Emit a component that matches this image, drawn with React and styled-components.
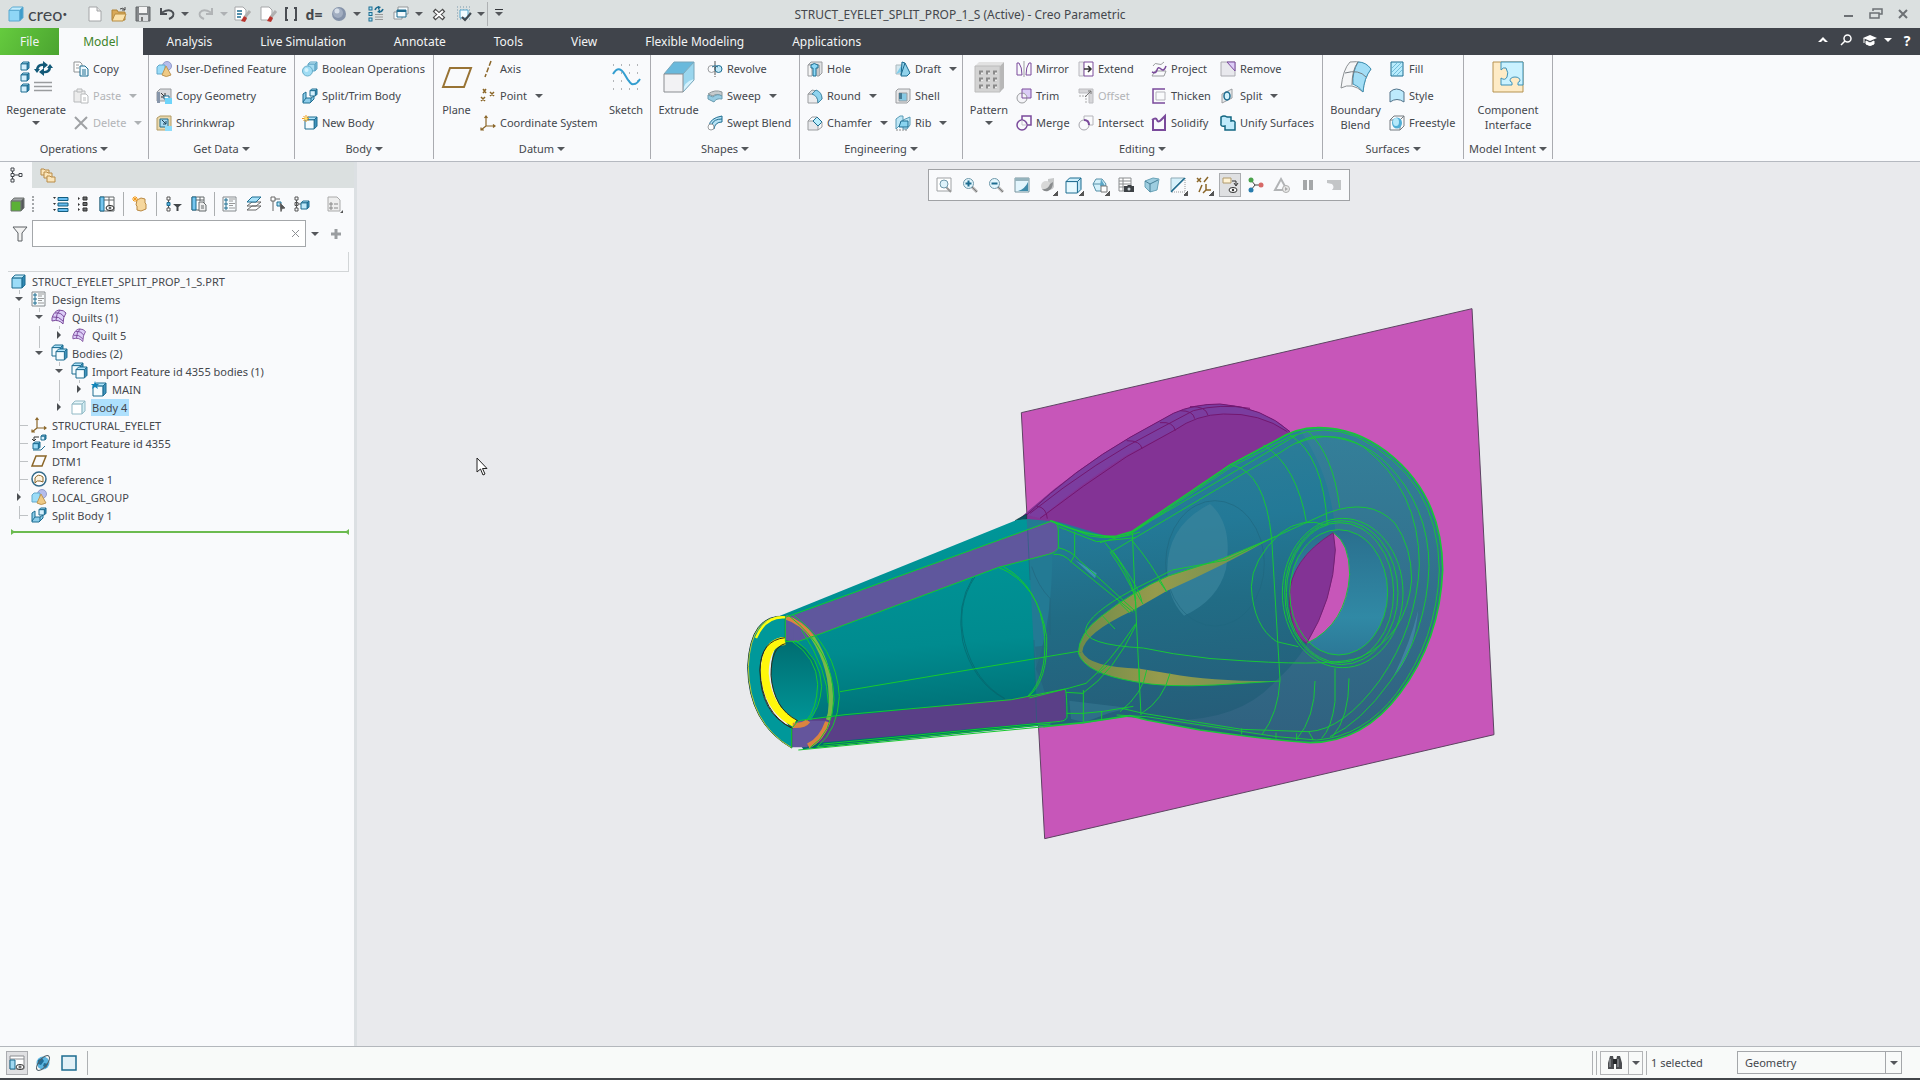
import { useState } from "react";
import styled, { createGlobalStyle, css } from "styled-components";

const B = "#1d6c90";
const L = "#aee4fb";
const P = "#7a4a9b";
const V = "#dccdf7";
const G = "#9b9da0";
const W = "#8a6527";
const D = "#43474d";

const Cube = ({ x = 2, y = 2, s = 12, front = "#d5f0fd", side = "#3f93bd", top = L, line = B }) => {
  const d = s * 0.24;
  return (
    <g stroke={line} strokeLinejoin="round">
      <path d={`M${x} ${y + d}l${d} ${-d}h${s - d}l${-d} ${d}z`} fill={top} />
      <path d={`M${x + s - d} ${y + d}l${d} ${-d}v${s - d}l${-d} ${d}z`} fill={side} />
      <rect x={x} y={y + d} width={s - d} height={s - d} fill={front} />
    </g>
  );
};

const SmallSquares = ({ x = 1, color = B, fill = L }) => (
  <g stroke={color} fill={fill}>
    <rect x={x} y="1" width="3" height="3" />
    <rect x={x} y="6.5" width="3" height="3" />
    <rect x={x} y="12" width="3" height="3" />
  </g>
);

const lens = (
  <>
    <path d="M10 10l5 5" stroke="#b4b4b4" strokeWidth="3" />
    <path d="M10 10l5 5" stroke="#7c7c7c" />
    <circle cx="6.5" cy="6.5" r="5" fill="#e3f6fd" stroke="#6f98aa" />
  </>
);

const quilt = (x, y, s) => (
  <g transform={`translate(${x} ${y}) scale(${s})`} stroke={P} fill={V}>
    <path d="M1 9Q3 2 8 1q5 0 7 3-3 4-3 11-4-5-11-3z" />
    <path d="M4 4q6-1 9 4M2 8q6-1 10 4M9 1Q5 5 5 11" fill="none" />
  </g>
);

const csys = (
  <g stroke={W} fill="none" strokeWidth="1.2">
    <path d="M6 1v10h9M6 11l-5 4M4.500 3L6 1l1.500 2M13 9.500l2 1.500-2 1.500M1 12.500V15h3" />
  </g>
);

const group = (
  <>
    <circle cx="11" cy="5" r="4.500" fill="#b5bdec" stroke="#929bc9" />
    <path d="M1 6l2-2h6v7l-2 2H1z" fill="#9bdcf8" stroke="#62a8ca" />
    <path d="M10 5l5 9q-5 3-9 0z" fill="#efca85" stroke="#bd9656" />
  </>
);

const split = (
  <g stroke={B}>
    <path d="M1 6l3-2v6h5l3-2v3l-4 4H1z" fill="#8dcdea" />
    <path d="M4 10l-3 4M9 10v4" />
    <Cube x={8} y={1} s={7} />
  </g>
);

const page = (
  <path d="M1 1h8l3 3v10H1z" fill="#fff" stroke="#a5a7a9" />
);

const eraser = (
  <>
    <path d="M16 5l-5 6" stroke="#b0b0b0" strokeWidth="3" />
    <path d="M10 10l3 2-2 4-4-1z" fill="#b9332c" />
  </>
);

const icons = {
  logo: <Cube x={1} y={1} s={14} front="#8fd6f6" side="#3f9ccb" top="#c5ecfd" line="#5aa9d0" />,
  newFile: <><path d="M2 1h8l4 4v10H2z" fill="#fff" stroke="#a2a4a6" /><path d="M10 1v4h4" fill="#e3e3e3" stroke="#a2a4a6" /></>,
  open: <><path d="M1 14V4h5l1 2h7v8z" fill="#d9a958" stroke="#af8337" /><path d="M1 15l3-7h11l-3 7z" fill="#fbe2ab" stroke="#b78d42" /><path d="M9 3q3-2 5 1M14 1v3h-3" fill="none" stroke="#444" /></>,
  save: <><path d="M1 1h14v14H1z" fill="#85888b" stroke="#636669" /><path d="M4 1h8v6H4z" fill="#f4f4f4" /><path d="M4 9h9v6H4z" fill="#dcdee0" /><path d="M6 11h2v4H6z" fill="#777" /></>,
  undo: <g fill="none" stroke="#4a4e53" strokeWidth="2"><path d="M2 6.500q8-4.500 11 0 2 4-4 6.500" /><path d="M1 2v6h6" /></g>,
  redo: <g fill="none" stroke="#b1b4b6" strokeWidth="2"><path d="M14 6.500q-8-4.500-11 0-2 4 4 6.500" /><path d="M15 2v6H9" /></g>,
  eraseCurrent: <>{page}<path d="M3 5h5M3 8h5M3 11h4" stroke={B} strokeWidth="1.500" />{eraser}</>,
  eraseOther: <>{page}{eraser}</>,
  brackets: <path d="M5 2H3v12h2M11 2h2v12h-2" fill="none" stroke="#4a4e53" strokeWidth="2" />,
  sphere: <><circle cx="8" cy="8" r="7" fill="#8492a9" /><circle cx="7" cy="7" r="5" fill="#a2aec1" /><circle cx="6" cy="5" r="2.500" fill="#d7dfe9" /></>,
  regen: <><SmallSquares /><path d="M7 8.500h8M7 11h8M7 13.500h8" stroke="#999" /><path d="M7 4q1-3 4-3M15 3q-1 3-4 3" fill="none" stroke={B} strokeWidth="1.500" /><path d="M10 0l3 1-3 3zM12 7L9 6l3-3z" fill={B} /></>,
  windows: <g fill="#f3fafd" stroke={B}><path d="M5 1h10v7H5z" stroke="#949698" /><path d="M1 6h8v7H1z" stroke="#949698" /><path d="M4 4h9v7H4z" /><path d="M4 5h9" strokeWidth="2" /></g>,
  closeWin: <><path d="M3 4l10 9M13 4L3 13" stroke="#4a4a4a" strokeWidth="4" /><path d="M4 5l8 7M12 5l-8 7" stroke="#fff" strokeWidth="2" /></>,
  select: <><path d="M1 1h14M1 4h14M1 7h14M1 10h14M1 13h14" stroke="#7898aa" strokeDasharray="1 2" /><path d="M4 4h8v8H4z" fill="#f2fbff" stroke="#54a6cd" /><path d="M6 11l3 3 6-7" fill="none" stroke="#414950" strokeWidth="2" /></>,
  copy: <g fill="#fff"><path d="M1 1h6l2 2v8H1z" stroke="#8f9294" /><path d="M3 4h3M3 7h3" stroke="#999" /><path d="M7 5h5l3 3v7H7z" fill="#f0faff" stroke={B} /><path d="M9 9h4M9 11h4M9 13h4" stroke={B} /></g>,
  paste: <g fill="#ececec" stroke="#b7b9bb"><path d="M1 3h11v11H1z" /><path d="M4 1h5v3H4z" /><path d="M8 6h5l2 2v7H8z" fill="#fff" /><path d="M10 10h3M10 12h3" /></g>,
  remove: <path d="M2 2l12 12M14 2L2 14" stroke="#9fa1a4" strokeWidth="2" />,
  udf: group,
  copyGeom: <><path d="M1 4l3-3h11v9l-3 3H1z" fill="#d8dadd" stroke="#96999d" /><path d="M1 4v11h3V4z" fill="#8796aa" /><path d="M5 5l4 4M9 5v4H5" stroke="#333" fill="none" /><path d="M8 8h5v3H8z" fill="#fff" stroke={B} /><path d="M9 10h7v6H9z" fill="#6ed4fa" /></>,
  shrink: <><path d="M1 3l3-2h11v10l-3 4H1z" fill="#e9d8ad" stroke="#b29a63" /><path d="M4 4h8v8H4z" fill="#a9d9f0" stroke={B} /><path d="M6 5l4 4M10 6v3H7" stroke="#1d4258" fill="none" /><path d="M9 11h7v5H9z" fill="#8ddcfa" /></>,
  boolean: <><Cube x={6} y={1} s={9} top="#d3f0fb" side="#7fbad3" front="#a6dcf2" line="#5ba4c4" /><circle cx="5.500" cy="10" r="5" fill="#9fdcf4" stroke="#6aaec9" /><circle cx="4.500" cy="9" r="2" fill="#d3f2fd" /></>,
  splitBody: split,
  newBody: <><Cube x={3} y={2} s={12} front="#f5fcff" /><path d="M4 0v7M0 3.500h7M1.500 1l5 5M6.500 1l-5 5" stroke="#f09a1a" /><circle cx="4" cy="3.500" r="1.500" fill="#ffe36c" /></>,
  axis: <path d="M11 0L5 16" stroke={W} strokeWidth="1.500" strokeDasharray="5 2" />,
  point: <path d="M3 1l3 4M6 1L3 5M10 4l4 4M14 4l-4 4M1 9l4 4M5 9l-4 4" stroke={W} strokeWidth="1.500" />,
  csys,
  revolve: <g fill="none" stroke={G}><ellipse cx="4.500" cy="8" rx="3.500" ry="3.500" /><ellipse cx="11.500" cy="8" rx="3.500" ry="3.500" fill="#bfe7f7" stroke={B} /><path d="M5 6q3-3 6 0" stroke={B} /><path d="M8 0v16" stroke="#555" strokeDasharray="4 1" /></g>,
  sweep: <><path d="M1 6q7-5 14-2v4q-6-3-9 0z" fill="#c5cbce" stroke="#8e9699" /><path d="M1 7l5 2q4-4 9-1v3q-6-1-8 3l-6-3z" fill="#96cbe2" stroke="#699baf" /></>,
  sweptBlend: <><path d="M2 11Q3 3 15 1v6q-7 0-8 7z" fill="#b8e3f5" stroke={B} /><path d="M5 9q2-5 10-5" stroke={B} fill="none" /><circle cx="4" cy="12" r="3" fill="#fff" stroke={G} /></>,
  hole: <><path d="M1 4l3-3h11v11l-3 3V4z" fill="#e0e2e4" stroke={G} /><path d="M1 4h4v11H1zM10 4h2v11h-2z" fill="#f4f4f4" stroke={G} /><path d="M4 4q3-3 7 0v3H9v8H6V7H4z" fill="#8ed9f7" stroke={B} /></>,
  round: <><path d="M1 6h5q5 1 5 9H1z" fill="#ebecee" stroke={G} /><path d="M1 6l4-4q10 1 10 9l-4 4q0-8-5-9z" fill="#d9dee1" stroke={G} /><path d="M5 6l4-4q6 2 6 9l-4 4q0-7-6-9z" fill="#8fd3ee" stroke="#438aa8" /></>,
  chamfer: <><path d="M1 6h5l5 5v4H1z" fill="#e7e8eb" stroke={G} /><path d="M6 6l4-4 5 5-4 4z" fill="#b9edfc" stroke={B} /><path d="M1 6l4-4h5M15 7v5l-4 3" fill="none" stroke={G} /></>,
  draft: <><path d="M1 4h7v9H1z" fill="#d4e7ef" stroke="#abb9be" /><path d="M1 13l5-2V5z" fill="#80cdea" /><path d="M7 1l3 1 5 10-3 3H6z" fill="#90d2eb" stroke={B} /><path d="M10 2l-4 12" stroke={B} /></>,
  shell: <><path d="M1 3l2-2h12v11l-3 3H1z" fill="#e5e6e8" stroke={G} /><path d="M4 5h8v8H4z" fill="#87cae5" stroke={G} /><path d="M4 5h3v6H4z" fill="#477c95" /></>,
  rib: <><path d="M1 4l4-3h3v9H5l-4 4zM8 5l7-3v8l-3 4H8z" fill="#bfe7f6" stroke="#599ab5" /><path d="M4 12h9V6H6z" fill="#8ad4ef" stroke={B} /><path d="M1 15h11" stroke="#888" strokeDasharray="2 1" /></>,
  mirror: <g fill="none" stroke={P}><path d="M1 2h2q3 4 3 12H1zM15 2h-2q-3 4-3 12h5z" /><path d="M8 0v16" stroke={G} /></g>,
  trim: <><path d="M6 1h9v9H6z" fill={V} stroke={P} /><circle cx="6" cy="10" r="5" fill="#f4f4f8" stroke={G} /><path d="M6 5v5h5" fill="none" stroke={P} /></>,
  merge: <g fill="none"><path d="M6 5V1h9v9h-4" stroke={P} strokeWidth="1.500" /><circle cx="6" cy="10" r="5" stroke={P} strokeWidth="1.500" /><path d="M6 5v5h5" stroke="#c3c3c9" /></g>,
  extend: <><path d="M1 1h5v14H1z" fill="#ededf0" stroke="#b9b9bf" /><path d="M6 1h9v14H6z" fill="#fff" stroke={P} /><path d="M6 8h6M10 5l3 3-3 3" fill="none" stroke="#333" strokeWidth="1.500" /></>,
  offset: <><path d="M1 1h14v14h-4V5H1z" fill="#d6d6d9" stroke="#bcbcc0" /><path d="M1 8h7v7" stroke="#aaa" strokeDasharray="2 1" fill="none" /><path d="M7 9l6-6M10 3h3v3" fill="none" stroke="#777" /></>,
  intersect: <><path d="M6 1h9v9h-4M6 1v4" fill="none" stroke="#b4b4ba" /><circle cx="6" cy="10" r="5" fill="none" stroke="#a6a6ad" /><path d="M6 5q5 0 5 5" stroke={P} strokeWidth="2" fill="none" /></>,
  project: <g fill="none"><path d="M2 5q2-4 5-2t6-2" stroke={G} /><path d="M1 15l3-5h11l-2 5z" stroke={G} /><path d="M1 11q4 2 5-2t4-1 5-3" stroke={P} strokeWidth="1.500" /></g>,
  thicken: <g fill="none"><path d="M14 1H2v14h12" stroke={P} strokeWidth="1.500" /><path d="M14 4H5v8h9z" stroke="#b4b4bb" /></g>,
  solidify: <path d="M1 5q4-3 5 0t4 0 4-4v14H2V5" fill="none" stroke={P} strokeWidth="2" />,
  removeSurf: <><path d="M1 1h14v14H1z" fill="#e8e8ed" stroke="#aaaab0" /><path d="M7 1h8v9z" fill={V} stroke={P} /></>,
  splitSurf: <><path d="M2 6l10-5v9L2 15z" fill="#e8ebed" stroke={G} /><ellipse cx="7" cy="8" rx="3" ry="4" fill="#d3f1fb" stroke={B} strokeWidth="1.500" /></>,
  unify: <path d="M1 2q3-2 6 0h4v4q5-1 4 3v6H5v-4q-5 1-4-3z" fill="#bfeafb" stroke="#126681" strokeWidth="1.500" />,
  fill: <><path d="M2 1h12v14H2z" fill="#b8ecfd" stroke={B} /><path d="M3 7l5-5M3 11l9-9M4 14l9-9M8 14l5-5" stroke="#72bdda" /></>,
  style: <path d="M1 4q6-6 14 0v10q-7-5-14 0z" fill="#bdeafc" stroke="#52738a" />,
  freestyle: <><path d="M1 5l4-4h10v10l-4 4H1zM1 5h10v10M11 5l4-4" fill="none" stroke="#747b80" /><ellipse cx="8" cy="8" rx="5" ry="5.500" fill="#51aed5" /><ellipse cx="7" cy="7" rx="3" ry="4" fill="#b5e9fb" /></>,
  tree: <g fill="none" stroke={D}><path d="M3 1h3v3H3zM3 6.500h3v3H3zM3 12h3v3H3zM11 6.500h3v3h-3z" /><path d="M6 8h5M4.500 4v2.500M4.500 9.500V12" /></g>,
  folders: <g fill="#fbe5b9" stroke="#b88b46"><path d="M1 2h3l1 1h4v5H1z" /><path d="M4 5h3l1 1h4v5H4z" /><path d="M7 9h3l1 1h4v5H7z" /></g>,
  greenCube: <Cube x={1} y={2} s={13} front="#5bb136" side="#55585b" top="#a0a3a5" line="#6e7370" />,
  expand: <g><path d="M0 1h3l-1.500 2zM0 7h3l-1.500 2zM0 13h3l-1.500 2z" fill="#333" /><path d="M5 1.500h10v3H5zM5 7h10v3H5zM5 12.500h10v3H5z" fill="#67bdf0" stroke="#135e80" /></g>,
  collapse: <g><path d="M2 1v3l2-1.500zM2 7v3l2-1.500zM2 12v3l2-1.500z" fill="#333" /><path d="M7 1h4v3H7zM7 6.500h4v3H7zM7 12h4v3H7z" fill="#6b6e70" stroke="#333" /></g>,
  columns: <g stroke="#63686b"><path d="M1 1h14v14H1z" fill="#fff" /><path d="M1 1h4v14H1z" fill="#77c6ef" stroke={B} /><path d="M5 4h10M10 1v9" /><ellipse cx="11" cy="12" rx="4" ry="2.500" fill="#fff" stroke="#222" /><circle cx="11" cy="12" r="1" fill="#222" /></g>,
  newItem: <><path d="M5 4l4-2 4 1v4l1 1v5l-5 2-4-1v-4l-1-1z" fill="#f6d79d" stroke="#b98841" /><path d="M3 0v6M0 3h6M1 1l4 4M5 1L1 5" stroke="#f39a19" /></>,
  filterTree: <g><path d="M1 1h3v3H1zM1 12h3v3H1zM2.500 4v8" fill="#fff" stroke="#555" /><path d="M1 6.500h3v3H1z" fill="#54aee0" stroke={B} /><path d="M7 8h9l-3.500 3v4h-2v-4z" fill="#44484c" /></g>,
  columnsPage: <g stroke="#63686b"><path d="M1 1h12v13H1z" fill="#fff" /><path d="M1 1h4v13H1z" fill="#77c6ef" stroke={B} /><path d="M5 4h8M9 1v4" /><path d="M8 6h4l3 3v6H8z" fill="#eee" /><path d="M10 10h3M10 12h3" /></g>,
  list: <g><path d="M1 1h13v14H1z" fill="#f7fbfd" stroke="#85898c" /><path d="M3 3h2v2H3zM3 7h2v2H3zM3 11h2v2H3z" fill="#fff" stroke={B} /><path d="M7 3h6M7 5h4M7 7.500h6M7 9.500h4M7 12h6" stroke="#999" /></g>,
  layers: <g><path d="M1 14l5-4h9l-5 4zM1 10l5-4h9l-5 4z" fill="#fff" stroke="#666" /><path d="M1 6l5-5h9l-5 5z" fill="#a8e2fa" stroke={B} /></g>,
  pick: <g fill="#fff" stroke="#666"><path d="M1 1h4v4H1zM5 3h5M3 5v10" /><path d="M7 6h4v4H7z" fill={L} stroke={B} /><path d="M10 7l5 5-3 .5-1 3z" fill="#555" /></g>,
  treeBody: <><g fill="none" stroke="#555"><path d="M1 1h3v3H1zM1 6.500h3v3H1zM1 12h3v3H1zM4 8h3M2.500 4v8" /></g><Cube x={7} y={5} s={8} front="#bfe9fa" /></>,
  notes: <g><path d="M2 1h9l3 3v11H2z" fill="#eee" stroke="#aaa" /><path d="M4 7h2v2H4zM4 11h2v2H4zM8 8h4M8 12h4" fill="none" stroke="#888" /><path d="M17 14v3h-3z" fill="#555" /></g>,
  funnel: <path d="M1 1h14l-5 6v8H6V7z" fill="#f2f2f2" stroke="#5c6065" />,
  part: <Cube x={1} y={2} s={13} front="#9bdcf8" side="#3189b4" top="#c3edfd" />,
  quilts: <>{quilt(0, 0, 1)}</>,
  quilt: <>{quilt(1, 1, 0.9)}</>,
  bodies: <><Cube x={1} y={0} s={11} front="#f4fcff" /><Cube x={5} y={4} s={11} front="#f4fcff" /></>,
  main: <><Cube x={2} y={2} s={13} front="#f4fcff" /><path d="M4 0l1.200 3H8L6 5l1 3-3-2-3 2 1-3-2-2h3z" fill="#1285b9" /></>,
  body: <Cube x={1} y={2} s={13} front="#fff" side="#d3edf4" top="#e7f6fa" line="#91b9c5" />,
  importFeat: <><Cube x={10} y={0} s={5} /><Cube x={2} y={7} s={7} front="#9bdcf8" /><path d="M8 2H3v4M1 4l2 2 2-2" fill="none" stroke="#333" /><path d="M2 15h8l4-4" fill="none" stroke={B} /></>,
  datum: <path d="M1 13L5 3h10l-4 10z" fill="none" stroke={W} strokeWidth="1.500" />,
  reference: <><circle cx="8" cy="8" r="7" fill="#fff" stroke="#356b89" strokeWidth="1.500" /><path d="M4 12V7q3-5 8-1v5l-3-1q-3-1-5 2z" fill="#fdf3df" stroke={W} /></>,
  zoomFit: <><path d="M1 1h14v13H1z" fill="#fff" stroke="#9ea1a4" /><path d="M10 10l5 5" stroke="#999" strokeWidth="2" /><circle cx="8" cy="7" r="4" fill="#def3fb" stroke="#6f98aa" /></>,
  zoomIn: <>{lens}<path d="M3.500 6.500h6M6.500 3.500v6" stroke={B} strokeWidth="2" /></>,
  zoomOut: <>{lens}<path d="M3.500 6.500h6" stroke={B} strokeWidth="2" /></>,
  repaint: <><path d="M1 1h14v14H1z" fill="#e2f5fd" stroke="#78949e" /><path d="M1 1h14v3H1z" fill="#95b3bd" /><path d="M14 5v9H4q7-2 10-9z" fill="#3f8baa" /></>,
  shade: <><path d="M8 2l6-1v9q-2 4-6 2z" fill="#c7c9ca" /><circle cx="6" cy="9" r="5" fill="#d8d8d8" /><path d="M2 12q6 1 8-5l3-2q0 7-5 9-4 1-6-2z" fill="#888b8d" /></>,
  views: <Cube x={0} y={1} s={15} front="#e7f9ff" side="#bde4f4" top="#ceeffb" />,
  saved: <><path d="M1 7l3-5h6l4 5-3 7H4z" fill="#d3f0fa" stroke="#5790a8" /><path d="M1 7h8" stroke="#5790a8" /><path d="M9 2l4 7H8z" fill="#5ba6c7" /><path d="M9 9h6v6H9z" fill="#fff" stroke="#777" /></>,
  camera: <><path d="M1 1h12v13H1zM1 4h12M1 7h12M1 10h12M5 1v13" fill="#fff" stroke="#8b8e90" /><path d="M6 9h3l1-1h3l1 1h2v6H6z" fill="#3d4145" /><circle cx="11" cy="12" r="1.500" fill="#cbd4d9" /></>,
  perspective: <><path d="M1 4l8-3 6 1-2 11-7 2-5-5z" fill="#9dcde0" stroke="#6aa3b8" /><path d="M1 4l5 3 8-4M6 7v8" fill="none" stroke="#477f97" /></>,
  section: <><path d="M1 1h13L1 14z" fill="#d6f0fa" stroke="#8ca9b5" /><path d="M15 1v14H2" fill="none" stroke="#999" strokeDasharray="1 1" /><path d="M15 1L1 15" stroke={B} strokeWidth="1.500" /></>,
  datums: <path d="M1 1l4 4M5 1L1 5M12 0L8 5M6 8l-3 7M10 7v6h5M10 13l-3 3" fill="none" stroke={W} strokeWidth="1.500" />,
  annot: <><path d="M1 1h8v5H1z" fill="#fff3d5" stroke="#b09a6c" /><path d="M10 4h4v4M12 6l2 3 2-3" fill="none" stroke="#333" /><ellipse cx="11" cy="13" rx="4" ry="2.500" fill="#fff" stroke="#333" /><circle cx="11" cy="13" r="1.200" fill="#333" /></>,
  spin: <><path d="M3 3l4 5-4 5M7 8h6" fill="none" stroke="#444" /><circle cx="3" cy="3" r="2.500" fill="#4aa24b" /><circle cx="3" cy="13" r="2.500" fill="#287cae" /><circle cx="13" cy="8" r="2.500" fill="#d76967" /></>,
  sim: <><path d="M7 2l6 11H1z" fill="none" stroke="#b2b4b6" strokeWidth="2" /><circle cx="12" cy="12" r="3.500" fill="#e9e9e9" stroke="#adadad" /><path d="M11 10l3 2-3 2z" fill="#aaa" /></>,
  pause: <path d="M3 3h4v10H3zM9 3h4v10H9z" fill="#a5a7a9" />,
  stream: <path d="M1 3h14v10H6q3-3 0-6L1 6z" fill="#c3c5c7" />,
  navigator: <g stroke="#8a8d90"><path d="M1 1h14v13H1z" fill="#fff" /><path d="M1 4h14" /><path d="M1 5h5v9H1z" fill="#a1d8f1" stroke={B} /><ellipse cx="11" cy="12" rx="4" ry="2.500" fill="#fff" stroke="#333" /><circle cx="11" cy="12" r="1.200" fill="#333" /></g>,
  globe: <><circle cx="8" cy="8" r="6.500" fill="#5bb5e0" /><path d="M3 5l4-2 2 3-3 4-3-1zM9 8l4 1-2 4-3-2z" fill="#206e98" /><ellipse cx="8" cy="8" rx="9" ry="4" transform="rotate(-50 8 8)" fill="none" stroke="#51616a" /></>,
  square: <path d="M1 1h14v14H1z" fill="#e2f1f7" stroke={B} strokeWidth="1.500" />,
  find: <><path d="M3 1h3l1 5v8H1V8zM10 1h3l2 7v6H9V6z" fill="#4a4d50" /><path d="M6 4h4v5H6z" fill="#25282a" /><path d="M3 4v8M11 4v8" stroke="#a6abae" /></>,
  minimize: <path d="M3 10h9" stroke="#6c7074" strokeWidth="2" />,
  restore: <path d="M5 5V3h9v5h-3M2 7h9v5H2zM2 7h9" fill="none" stroke="#6c7074" strokeWidth="1.500" />,
  close: <path d="M4 4l8 8M12 4l-8 8" stroke="#6c7074" strokeWidth="2" />,
  up: <path d="M3 10l5-5 5 5h-3L8 8l-2 2z" fill="#fff" />,
  search: <path d="M7 9l-4 4M9.500 3a3.500 3.500 0 1 0 0 7 3.500 3.500 0 1 0 0-7z" fill="none" stroke="#fff" strokeWidth="1.500" />,
  learn: <><path d="M1 6l7-3 7 3-7 3z" fill="#fff" /><path d="M4 9v3q4 3 8 0V9l-4 2zM2 6v5" fill="#fff" stroke="#fff" /></>,
};

const big = {
  regenerate: (
    <>
      {[1, 12, 23].map((y) => <Cube key={y} x={1} y={y} s={8} />)}
      <path d="M14 21.500h18M14 25.500h18M14 29.500h18" stroke="#9a9c9e" strokeWidth="1.500" />
      <path d="M17 9q1-6 7-5M30 5q0 7-7 6" fill="none" stroke="#125978" strokeWidth="2.500" />
      <path d="M23 0l5 4-5 4zM24 7l-5 4 5 4zM14 8h6l-3 4zM27 7h6l-3-4z" fill="#125978" />
    </>
  ),
  plane: <path d="M2 26L9 7h21l-7 19z" fill="none" stroke="#987334" strokeWidth="2" />,
  sketch: (
    <>
      <path d="M3 4h27M3 12h27M3 20h27M3 28h27" stroke="#6d7175" strokeDasharray="1 7" />
      <path d="M3 13q6-10 12 1t9 9q3 0 6-5" fill="none" stroke="#349ed0" strokeWidth="2" />
    </>
  ),
  extrude: (
    <>
      <path d="M1 13L11 1h20L20 13z" fill="#69b9dc" />
      <path d="M20 13L31 1v18L20 31z" fill="#9ad6ee" />
      <path d="M31 1v18L20 31q0-10 11-13z" fill="#d4f2fd" />
      <path d="M1 13L11 1h20v18L20 31M20 13L31 1" fill="none" stroke="#78a6ba" />
      <path d="M1 13h19v18H1z" fill="#f2f2f4" stroke="#8a8d91" />
    </>
  ),
  pattern: (
    <>
      <path d="M2 5l4-4h25l-4 4z" fill="#e2e2e2" />
      <path d="M27 5l4-4v26l-4 4z" fill="#b7b7b7" />
      <path d="M2 5h25v26H2z" fill="#d3d3d3" stroke="#bcbcbc" />
      <path d="M6 11.500h18M6 18.500h18M6 25.500h18" stroke="#8b8b8b" strokeWidth="4" strokeDasharray="4 3" />
      <path d="M8 12.500h16M8 19.500h16M8 26.500h16" stroke="#ececec" strokeWidth="2" strokeDasharray="2 5" />
    </>
  ),
  boundary: (
    <>
      <path d="M1 27Q3 8 10 1q14-2 21 7-7 9-8 23Q12 21 1 27z" fill="#f5f6f7" stroke="#8c9093" />
      <path d="M18 1q-6 11-5 22 6 2 10 8 1-14 8-23-5-7-13-7z" fill="#a3def6" stroke="#3e92b5" />
      <path d="M5 12q14-4 21 4M18 1q-6 8-6 23" fill="none" stroke="#777d82" />
    </>
  ),
  component: (
    <>
      <path d="M1 1h30v30H1z" fill="#feebc6" stroke="#b59251" />
      <path d="M9 1h22v23h-5q-1-3 2-4 0-4-5-4t-5 4q3 1 2 4H9v-7q4 3 6-1t-1-9q-3-1-5 2z" fill="#caf2ff" stroke="#3d91b8" />
    </>
  ),
};

const Icon = ({ name, size = 16 }) => (
  <Svg $size={size} viewBox={big[name] ? "0 0 32 32" : "0 0 16 16"} aria-hidden="true">
    {big[name] || icons[name]}
  </Svg>
);

const ribbon = [
  {
    title: "Operations",
    cols: [
      { big: "regenerate", label: "Regenerate", w: 58, menu: true },
      { w: 68, items: [["copy", "Copy"], ["paste", "Paste", 1, 1], ["remove", "Delete", 1, 1]] },
    ],
  },
  { title: "Get Data", cols: [{ w: 131, items: [["udf", "User-Defined Feature"], ["copyGeom", "Copy Geometry"], ["shrink", "Shrinkwrap"]] }] },
  { title: "Body", cols: [{ w: 124, items: [["boolean", "Boolean Operations"], ["splitBody", "Split/Trim Body"], ["newBody", "New Body"]] }] },
  {
    title: "Datum",
    cols: [
      { big: "plane", label: "Plane", w: 31 },
      { w: 121, items: [["axis", "Axis"], ["point", "Point", 1], ["csys", "Coordinate System"]] },
      { big: "sketch", label: "Sketch", w: 34 },
    ],
  },
  {
    title: "Shapes",
    cols: [
      { big: "extrude", label: "Extrude", w: 41 },
      { w: 85, items: [["revolve", "Revolve"], ["sweep", "Sweep", 1], ["sweptBlend", "Swept Blend"]] },
    ],
  },
  {
    title: "Engineering",
    cols: [
      { w: 80, items: [["hole", "Hole"], ["round", "Round", 1], ["chamfer", "Chamfer", 1]] },
      { w: 60, items: [["draft", "Draft", 1], ["shell", "Shell"], ["rib", "Rib", 1]] },
    ],
  },
  {
    title: "Editing",
    cols: [
      { big: "pattern", label: "Pattern", w: 38, menu: true },
      { w: 54, items: [["mirror", "Mirror"], ["trim", "Trim"], ["merge", "Merge"]] },
      { w: 65, items: [["extend", "Extend"], ["offset", "Offset", 0, 1], ["intersect", "Intersect"]] },
      { w: 61, items: [["project", "Project"], ["thicken", "Thicken"], ["solidify", "Solidify"]] },
      { w: 95, items: [["removeSurf", "Remove"], ["splitSurf", "Split", 1], ["unify", "Unify Surfaces"]] },
    ],
  },
  {
    title: "Surfaces",
    cols: [
      { big: "boundary", label: "Boundary Blend", w: 51 },
      { w: 67, items: [["fill", "Fill"], ["style", "Style"], ["freestyle", "Freestyle"]] },
    ],
  },
  { title: "Model Intent", cols: [{ big: "component", label: "Component Interface", w: 74 }] },
];

const menus = ["Analysis", "Live Simulation", "Annotate", "Tools", "View", "Flexible Modeling", "Applications"];

const quick = [
  ["newFile", 24], ["open", 24], ["save", 24], ["undo", 25], ["arrow", 10], ["redo", 29], ["arrowOff", 9],
  ["eraseCurrent", 28], ["eraseOther", 23], ["brackets", 23], ["d=", 24], ["sphere", 25], ["arrow", 11],
  ["regen", 27], ["windows", 24], ["arrow", 12], ["closeWin", 27], ["select", 23], ["arrow", 12],
];

const treeTools = [
  ["greenCube", 24], ["dots", 16], ["expand", 25], ["collapse", 22], ["columns", 24], ["sep", 8], ["newItem", 26],
  ["sep", 9], ["filterTree", 26], ["columnsPage", 24], ["sep", 8], ["list", 24], ["layers", 24], ["pick", 24],
  ["treeBody", 24], ["notes", 40],
];

const viewTools = [
  "zoomFit", "zoomIn", "zoomOut", "repaint", "shade", "views", "saved", "camera",
  "perspective", "section", "datums", "annot", "spin", "sim", "pause", "stream",
];
const withMenu = ["shade", "views", "saved", "section", "datums"];

// guides: "l" line, "t" tick, "e" last tick, "b" blank, "o" open, "c" closed
const tree = [
  ["", "part", "STRUCT_EYELET_SPLIT_PROP_1_S.PRT"],
  ["o", "list", "Design Items"],
  ["lo", "quilts", "Quilts (1)"],
  ["llc", "quilt", "Quilt 5"],
  ["lo", "bodies", "Bodies (2)"],
  ["lbo", "bodies", "Import Feature id 4355 bodies (1)"],
  ["lblc", "main", "MAIN"],
  ["lbc", "body", "Body 4"],
  ["t", "csys", "STRUCTURAL_EYELET"],
  ["t", "importFeat", "Import Feature id 4355"],
  ["t", "datum", "DTM1"],
  ["t", "reference", "Reference 1"],
  ["c", "udf", "LOCAL_GROUP"],
  ["e", "splitBody", "Split Body 1"],
];

function Model3D() {
  return (
    <ModelSvg viewBox="0 -240 2340 1650" role="img" aria-label="Structural eyelet model">
      <defs>
        <linearGradient id="tube" x1="0" y1="0" x2="0.1" y2="1">
          <stop offset="0" stopColor="#00989a" />
          <stop offset="0.6" stopColor="#008b8f" />
          <stop offset="1" stopColor="#00696f" />
        </linearGradient>
        <linearGradient id="eye" x1="0" y1="0" x2="0.15" y2="1">
          <stop offset="0" stopColor="#2f7f99" />
          <stop offset="0.35" stopColor="#237997" />
          <stop offset="0.6" stopColor="#216c85" />
          <stop offset="1" stopColor="#265c78" />
        </linearGradient>
        <linearGradient id="rim" x1="0" y1="0" x2="0" y2="1">
          <stop offset="0" stopColor="#34809a" />
          <stop offset="0.5" stopColor="#32708d" />
          <stop offset="1" stopColor="#30617f" />
        </linearGradient>
        <linearGradient id="bore" x1="0" y1="0" x2="0" y2="1">
          <stop offset="0" stopColor="#2a6f8e" />
          <stop offset="0.7" stopColor="#3089a5" />
          <stop offset="1" stopColor="#2c7897" />
        </linearGradient>
        <linearGradient id="inner" x1="0" y1="0" x2="0" y2="1">
          <stop offset="0" stopColor="#006d71" />
          <stop offset="1" stopColor="#009496" />
        </linearGradient>
        <linearGradient id="olive" x1="0" y1="0" x2="1" y2="0">
          <stop offset="0" stopColor="#6f8a4a" />
          <stop offset="0.4" stopColor="#969b4c" />
          <stop offset="1" stopColor="#688f56" />
        </linearGradient>
      </defs>
      <path d="M874 98L2226-214l66 1278-1348 312z" fill="#c756b9" stroke="#5d4462" strokeWidth="3" />

      {/* far half of the eyelet, seen through the datum plane */}
      <path d="M870 415Q1030 270 1200 172L1330 100Q1390 72 1470 72 1600 82 1680 155L1720 470 1240 560 970 440z" fill="#833395" />
      <path d="M890 405Q1030 270 1200 172L1330 100Q1390 72 1470 72 1600 82 1680 155L1672 155Q1590 98 1480 102 1400 108 1330 152L1190 225Q1040 320 930 415z" fill="#7b3d9f" />
      <g fill="none" stroke="#731770" strokeWidth="3">
        <path d="M890 405Q1030 270 1200 172L1330 100Q1390 72 1470 72 1600 82 1680 155M900 400Q1100 240 1290 145L1390 92Q1470 70 1560 85M930 415Q1060 315 1190 230L1335 150Q1400 104 1480 102 1590 98 1672 155" />
        <path d="M1190 182q42 0 46 24M1290 128q40-4 46 24M1350 92q40 0 44 24M1380 80q48-2 54 26M920 378q30 5 32 38" />
      </g>
      <path d="M855 422l35-20v16z" fill="#075560" stroke="#17373a" strokeWidth="2" />

      {/* tube */}
      <path d="M150 707L860 420l40-3 25 621-705 70q-110-150-90-280z" fill="url(#tube)" />
      <path d="M890 417L985 425 1240 500 1250 1000 1060 1027 925 1040z" fill="#237a94" />
      <path d="M915 800L1250 760v240l-190 30-135 8z" fill="#25687f" opacity="0.7" />

      {/* near half of the eyelet */}
      <path d="M965 422Q1090 475 1150 470 1190 465 1215 450L1500 255 1640 180Q1700 143 1760 143 1870 140 1970 215 2138 345 2138 570 2130 780 2010 940 1900 1088 1740 1088 1640 1082 1410 1050L1250 1020Q1190 998 1060 1028L965 1037q-20-120-48-170 60-170 48-445z" fill="url(#eye)" />
      <path d="M1710 150Q1860 120 1990 235 2138 370 2138 570 2130 780 2010 940 1900 1088 1740 1088L1260 1018Q1520 1040 1640 900 1800 760 1818 500 1815 300 1710 150z" fill="url(#rim)" />
      <path d="M1440 372q70 60 48 195-25 95-126 140-50-50-50-140 0-130 128-195z" fill="#3b849c" opacity="0.7" />
      <ellipse cx="1455" cy="550" rx="148" ry="188" fill="none" stroke="#20677e" strokeWidth="2" />
      <path d="M2065 690Q2050 830 1990 890q50-100 75-200z" fill="#4b93b2" opacity="0.6" />
      <path d="M1035 540l65 40-5 15z" fill="#50a9c8" opacity="0.6" />

      {/* eye opening */}
      <ellipse cx="1826" cy="637" rx="147" ry="188" fill="url(#bore)" />
      <path d="M1810 458Q1680 540 1678 650 1680 760 1730 790 1855 730 1859 580 1858 490 1810 458z" fill="#c756b9" />
      <path d="M1810 458Q1680 540 1678 650 1680 760 1730 790 1810 660 1816 510z" fill="#833395" stroke="#732173" strokeWidth="3" />

      {/* olive fillet */}
      <path d="M1045 820q0-60 70-112 90-72 200-120l165-53 145-60q-140 80-315 158l-100 58q-150 70-153 124z" fill="url(#olive)" />
      <path d="M1045 820q20 60 170 85 90 18 240 10l195-12q-200 2-330-22l-90-15q-155-5-173-51z" fill="url(#olive)" />

      {/* cut faces */}
      <path d="M166 715L965 423l18 15v70l-22 15-155 38L270 762l-65 22h-39z" fill="#5f579d" />
      <path d="M185 1045l20-23 640-65 160-30 3 85-12 10-770 70-41 8z" fill="#5a3f87" />
      <path d="M185 1045l20-23 90 0-20 50-45 30-45 0z" fill="#64559c" />
      <path d="M1018 962l180 22-60 15-75 28-40-10z" fill="#377892" opacity="0.6" />

      {/* tube mouth */}
      <path d="M166 709Q60 700 53 860 55 1030 185 1104v-60Q90 1000 90 870 92 780 166 773z" fill="#00989a" stroke="#113d3c" strokeWidth="3" />
      <path d="M166 780q-45 10-43 105 5 100 82 137l40-2q30-60 20-140-15-85-99-100z" fill="url(#inner)" />
      <path d="M166 711Q62 702 55 860 57 1030 185 1103" fill="none" stroke="#b9c935" strokeWidth="3" />
      <path d="M166 712q-60-5-88 62" fill="none" stroke="#ffff10" strokeWidth="7" />
      <path d="M166 783q-60 0-62 97 8 106 90 150" fill="none" stroke="#fff70c" strokeWidth="24" />
      <path d="M166 773Q92 780 90 870q5 130 97 175M166 791q-43 10-43 95 8 100 80 136" fill="none" stroke="#2d2d1b" strokeWidth="3" />
      <path d="M166 775v-60q15 0 24 5v60z" fill="#5f579d" />
      <path d="M168 712q45 14 80 60" fill="none" stroke="#db8440" strokeWidth="13" />
      <path d="M188 1036q35 2 46-14M235 1098q40-20 58-72" fill="none" stroke="#db8440" strokeWidth="16" />
      <path d="M248 772q60 93 54 203 0 25-8 45" fill="none" stroke="#78ba47" strokeWidth="13" />

      {/* dark hidden edges */}
      <g fill="none" stroke="#086168" strokeWidth="3" opacity="0.6">
        <path d="M728 594q-50 80-30 190 30 120 125 172" />
        <path d="M735 590q-60 90-30 200 30 115 120 166" />
        <path d="M893 450l7 150M905 560q20 60 55 95v110M912 780l8 250" stroke="#22647b" />
      </g>

      {/* highlighted edges */}
      <g fill="none" stroke="#16ca2e" strokeWidth="3">
        <path d="M166 712L965 423Q983 424 985 450v55q-10 15-30 18L806 562 270 762 205 784H166v-70" />
        <path d="M185 1104v-59l20-23 140-18 500-45 160-32q6 8 6 85-4 10-20 12L280 1092M205 1110l740-70M260 1100l700-68" />
        <path d="M190 706Q320 800 328 950 323 1050 262 1100M175 706Q310 810 312 960 306 1060 240 1103M215 750Q294 870 295 970M185 783q75 50 78 130-3 75-33 108M195 780q78 55 80 140-6 70-38 98" />
        <path d="M806 562Q925 610 950 770q5 130-55 180M820 560Q930 620 944 770q7 120-50 178" />
        <path d="M330 935L1045 814M965 422l115 46q80 15 150-12M985 440l115 45 115-12M1034 455v70l-12 22M1125 488Q1220 600 1218 690M1140 515q50 70 78 140" />
        <path d="M985 503q40 10 60 35l170 155M970 523q30-4 55 24l185 150M1218 730q-80 120-150 180l-50 14-120 30M1218 735q-65 140-160 205l-50-3M1060 930v95M1010 1000h50l60-6 90-15M1115 995v22" />
      </g>
      <g transform="translate(960)" fill="none" stroke="#18c638" strokeWidth="3">
        <path d="M0 422Q130 475 200 468L245 455 540 255 680 180Q740 143 800 143 910 140 1010 215 1178 345 1178 570 1170 780 1050 940 940 1088 780 1088 680 1082 450 1050L290 1020 240 1007 100 1028-20 1040" strokeWidth="5" />
        <path d="M150 488L245 460 545 260 720 170Q820 130 920 170 1165 290 1168 570 1160 780 1040 940 940 1070 800 1080L680 1070 290 1010 200 1005M180 518L590 275 690 218Q750 175 800 168 930 170 1010 250 1137 380 1137 560 1130 760 1020 905 930 1030 840 1070M740 190Q850 145 940 200 1108 330 1108 555 1100 740 990 900 880 1050 775 1055L575 1048 280 1000 215 985M230 465l510-300" />
        <path d="M247 458L255 640 273 1005M245 480q60 70 105 155M190 515q85 120 85 150M545 255q100 20 120 220l25 425q-5 100-55 165M640 195q100 60 130 235M720 165q100 60 112 270M775 155q75 70 94 228" />
        <path d="M85 820q0-60 70-112 90-72 200-120l165-53 145-60 165-75q130-50 205 30 50 70 50 170-15 165-150 230-70 30-345 13-110-4-220-22l-90-17q-180-10-173-56 8-45 140-118l120-60L530 540l145-70M85 820q20 60 170 85 90 18 240 10l195-12" />
        <ellipse cx="866" cy="637" rx="147" ry="188" />
        <ellipse cx="870" cy="638" rx="161" ry="210" />
        <ellipse cx="874" cy="638" rx="170" ry="216" />
        <ellipse cx="878" cy="639" rx="181" ry="224" />
        <path d="M830 436Q760 408 690 460 605 540 604 620 610 740 680 785l65 15M850 458q48 30 49 125-10 150-128 207" />
        <path d="M325 600l25 35M255 632l24 40M205 665l35 35M155 705l40 42M145 880l30-25M268 866v45M290 870q-10 70-80 125M360 880q-20 80-85 120M795 903q0 110-55 175M855 865v100q-10 80-40 110M897 895q0 120-50 175M575 1045v18M678 1058v18M740 1060v20M775 1053l15 27" />
      </g>
    </ModelSvg>
  );
}

function RibbonColumn({ col }) {
  if (col.big) {
    return (
      <BigButton $w={col.w}>
        <Icon name={col.big} size={32} />
        <span>{col.label}</span>
        {col.menu && <Arrow />}
      </BigButton>
    );
  }
  return (
    <Column $w={col.w}>
      {col.items.map(([icon, label, menu, off]) => (
        <Command key={label} disabled={!!off}>
          <Icon name={icon} />
          {label}
          {!!menu && <Arrow $off={!!off} $gap />}
        </Command>
      ))}
    </Column>
  );
}

function App() {
  const [filter, setFilter] = useState("");
  const [selected, setSelected] = useState("Body 4");

  return (
    <Window>
      <GlobalStyle />
      <TitleBar>
        <QuickBar>
          <Brand>
            <Icon name="logo" />
            creo<sup>•</sup>
          </Brand>
          {quick.map(([name, w], i) => (
            <ToolButton key={i} $w={w} aria-label={name}>
              {name.startsWith("arrow") ? (
                <Arrow $off={name === "arrowOff"} />
              ) : name === "d=" ? (
                <strong>d=</strong>
              ) : (
                <Icon name={name} />
              )}
            </ToolButton>
          ))}
          <BarLine />
          <ToolButton $w={22} aria-label="Customize">
            <CustomizeArrow />
          </ToolButton>
        </QuickBar>
        <h1>STRUCT_EYELET_SPLIT_PROP_1_S (Active) - Creo Parametric</h1>
        <WindowButtons>
          {["minimize", "restore", "close"].map((name) => (
            <ToolButton key={name} $w={27} aria-label={name}>
              <Icon name={name} />
            </ToolButton>
          ))}
        </WindowButtons>
      </TitleBar>

      <MenuBar>
        <FileTab>File</FileTab>
        <Tab $active>Model</Tab>
        {menus.map((menu) => (
          <Tab key={menu}>{menu}</Tab>
        ))}
        <MenuTools>
          <ToolButton $w={23} aria-label="Minimize ribbon"><Icon name="up" /></ToolButton>
          <ToolButton $w={24} aria-label="Search commands"><Icon name="search" /></ToolButton>
          <ToolButton $w={24} aria-label="Learning"><Icon name="learn" /></ToolButton>
          <ToolButton $w={12} aria-label="Learning options"><Arrow $light /></ToolButton>
          <ToolButton $w={26} aria-label="Help"><strong>?</strong></ToolButton>
        </MenuTools>
      </MenuBar>

      <Ribbon>
        {ribbon.map((grp) => (
          <Group key={grp.title}>
            <GroupBody>
              {grp.cols.map((col, i) => (
                <RibbonColumn key={i} col={col} />
              ))}
            </GroupBody>
            <GroupTitle>
              {grp.title}
              <Arrow />
            </GroupTitle>
          </Group>
        ))}
      </Ribbon>

      <Workspace>
        <Sidebar>
          <SideTabs>
            <SideTab $active aria-label="Model tree"><Icon name="tree" /></SideTab>
            <SideTab aria-label="Folders"><Icon name="folders" /></SideTab>
          </SideTabs>
          <TreeTools>
            {treeTools.map(([name, w], i) =>
              name === "sep" ? (
                <ToolLine key={i} $w={w} />
              ) : name === "dots" ? (
                <Grip key={i} />
              ) : (
                <ToolButton key={i} $w={w} aria-label={name}><Icon name={name} /></ToolButton>
              )
            )}
          </TreeTools>
          <FilterRow>
            <ToolButton $w={24} aria-label="Filter"><Icon name="funnel" /></ToolButton>
            <FilterBox>
              <input aria-label="Filter tree" value={filter} onChange={(e) => setFilter(e.target.value)} />
              <button aria-label="Clear filter" onClick={() => setFilter("")}>
                <svg width="9" height="9" viewBox="0 0 9 9"><path d="M1 1l7 7M8 1L1 8" stroke="#8d9093" /></svg>
              </button>
            </FilterBox>
            <ToolButton $w={18} aria-label="Filter history"><Arrow /></ToolButton>
            <ToolButton $w={24} aria-label="Add filter">
              <svg width="12" height="12" viewBox="0 0 12 12"><path d="M6 1v10M1 6h10" stroke="#9a9da0" strokeWidth="3" /></svg>
            </ToolButton>
          </FilterRow>
          <TreeHeader />
          <Tree>
            {tree.map(([guides, icon, label]) => (
              <TreeRow key={label}>
                {[...guides].map((g, i) => (
                  <Guide key={i} $type={g}>
                    {g === "o" && <Arrow />}
                    {g === "c" && <ClosedArrow />}
                  </Guide>
                ))}
                <TreeIcon><Icon name={icon} /></TreeIcon>
                <TreeLabel $selected={label === selected} onClick={() => setSelected(label)}>{label}</TreeLabel>
              </TreeRow>
            ))}
          </Tree>
          <InsertMarker />
        </Sidebar>

        <Viewport>
          <Model3D />
          <ViewBar>
            {viewTools.map((name) => (
              <ViewButton key={name} $on={name === "annot"} aria-label={name}>
                <Icon name={name} />
                {withMenu.includes(name) && <Corner />}
              </ViewButton>
            ))}
          </ViewBar>
          <Pointer viewBox="0 0 12 19">
            <path d="M1 1v14l3.500-3 2.500 6 2-1-2.500-5.500H11z" fill="#fff" stroke="#222" />
          </Pointer>
        </Viewport>
      </Workspace>

      <StatusBar>
        <ViewButton $on aria-label="Navigator"><Icon name="navigator" /></ViewButton>
        <ViewButton aria-label="Browser"><Icon name="globe" /></ViewButton>
        <ViewButton aria-label="Full screen"><Icon name="square" /></ViewButton>
        <BarLine />
        <StatusRight>
          <BarLine />
          <BarLine />
          <FindBox>
            <button aria-label="Find"><Icon name="find" /></button>
            <button aria-label="Find options"><Arrow /></button>
          </FindBox>
          <BarLine />
          <Count>1 selected</Count>
          <SelectBox>
            <select aria-label="Selection filter" defaultValue="Geometry">
              <option>Geometry</option>
              <option>Features</option>
            </select>
            <span><Arrow /></span>
          </SelectBox>
        </StatusRight>
      </StatusBar>
    </Window>
  );
}

const GlobalStyle = createGlobalStyle`
  * {
    box-sizing: border-box;
  }

  body {
    margin: 0;
    font-family: "Noto Sans", sans-serif;
    font-size: 11px;
    color: #44474c;
  }

  button, input, select {
    font: inherit;
    color: inherit;
    margin: 0;
    padding: 0;
    border: 0;
    background: none;
  }
`;

const Window = styled.div`
  display: flex;
  flex-direction: column;
  min-height: 100vh;
  border-bottom: 2px solid #43474b;
`;

const Svg = styled.svg`
  display: block;
  flex: none;
  width: ${(p) => p.$size}px;
  height: ${(p) => p.$size}px;
  overflow: visible;
`;

const Arrow = styled.i`
  flex: none;
  width: 0;
  border: solid transparent;
  border-width: 4px 4px 0;
  border-top-color: ${(p) => (p.$off ? "#aeb1b4" : p.$light ? "#fff" : "#54575b")};
  margin-left: ${(p) => (p.$gap ? "4px" : "0")};
`;

const ClosedArrow = styled.i`
  width: 0;
  border: solid transparent;
  border-width: 4px 0 4px 4px;
  border-left-color: #4b4e52;
`;

const CustomizeArrow = styled(Arrow)`
  position: relative;

  &::before {
    content: "";
    position: absolute;
    left: -4px;
    top: -7px;
    width: 8px;
    height: 1px;
    background: #33363a;
  }
`;

const ToolButton = styled.button`
  display: flex;
  flex: none;
  align-items: center;
  justify-content: center;
  width: ${(p) => p.$w}px;
  height: 24px;

  strong {
    font-size: 14px;
  }
`;

const BarLine = styled.span`
  flex: none;
  width: 1px;
  height: 24px;
  background: #aeb1b3;
`;

const TitleBar = styled.header`
  display: grid;
  grid-template-columns: 1fr auto 1fr;
  align-items: center;
  height: 28px;
  background: #dbe0e0;

  h1 {
    margin: 0;
    font-size: 12px;
    font-weight: 400;
  }
`;

const QuickBar = styled.div`
  display: flex;
  align-items: center;
`;

const Brand = styled.div`
  display: flex;
  align-items: center;
  gap: 4px;
  width: 83px;
  padding-left: 8px;
  font: 18px Lato, sans-serif;
  line-height: 24px;

  sup {
    font-size: 8px;
    margin-left: -4px;
  }
`;

const WindowButtons = styled.div`
  display: flex;
  justify-content: flex-end;
  padding-right: 4px;
`;

const MenuBar = styled.nav`
  display: flex;
  height: 27px;
  background: #40444b;
`;

const Tab = styled.button`
  padding: 0 24px;
  font-size: 12px;
  color: #f3f4f5;

  ${(p) =>
    p.$active &&
    css`
      color: #3f8429;
      background: #f9fafc;
    `}
`;

const FileTab = styled(Tab)`
  padding: 0 20px;
  background: linear-gradient(120deg, #65cb3e, #4ba430);
`;

const MenuTools = styled.div`
  display: flex;
  margin-left: auto;
  color: #fff;
`;

const Ribbon = styled.section`
  display: flex;
  height: 107px;
  padding-bottom: 2px;
  background: #f9fafc;
  border-bottom: 1px solid #b5b9c0;
`;

const Group = styled.div`
  display: flex;
  flex-direction: column;
  padding: 0 7px;
  border-right: 1px solid #aaabb0;
`;

const GroupBody = styled.div`
  display: flex;
  gap: 8px;
  height: 84px;
`;

const Column = styled.div`
  display: flex;
  flex-direction: column;
  width: ${(p) => p.$w}px;
`;

const Command = styled.button`
  display: flex;
  align-items: center;
  gap: 4px;
  height: 27px;
  white-space: nowrap;

  &:disabled {
    color: #b2b4b7;
  }
`;

const BigButton = styled.button`
  display: flex;
  flex-direction: column;
  align-items: center;
  width: ${(p) => p.$w}px;
  padding-top: 6px;
  line-height: 15px;

  span {
    margin: 9px 0 4px;
    text-align: center;
  }
`;

const GroupTitle = styled.div`
  display: flex;
  align-items: center;
  justify-content: center;
  gap: 3px;
  height: 21px;
  margin: 0 -4px;
  white-space: nowrap;
`;

const Workspace = styled.main`
  display: flex;
  flex: 1;
`;

const Sidebar = styled.aside`
  display: flex;
  flex-direction: column;
  flex: none;
  width: 357px;
  background: #f9fafc;
  border-right: 3px solid #dce0e3;
`;

const SideTabs = styled.div`
  display: flex;
  height: 26px;
  background: #dbe0e0;
`;

const SideTab = styled.button`
  display: flex;
  align-items: center;
  justify-content: center;
  width: 32px;
  background: ${(p) => (p.$active ? "#f9fafc" : "none")};
`;

const TreeTools = styled.div`
  display: flex;
  align-items: center;
  height: 32px;
  padding-left: 6px;
`;

const ToolLine = styled.span`
  width: ${(p) => p.$w}px;
  height: 24px;
  background: linear-gradient(#abaeb0, #abaeb0) center / 1px 100% no-repeat;
`;

const Grip = styled.span`
  width: 18px;
  height: 16px;
  border-left: 2px dotted #a4a7aa;
  margin-left: 2px;
`;

const FilterRow = styled.div`
  display: flex;
  align-items: center;
  padding: 0 6px 0 8px;
`;

const FilterBox = styled.div`
  display: flex;
  align-items: center;
  flex: 1;
  height: 27px;
  background: #fff;
  border: 1px solid #a4a7aa;

  input {
    flex: 1;
    min-width: 0;
    height: 24px;
    padding: 0 4px;
    outline: 0;
  }

  button {
    padding: 0 5px;
  }
`;

const TreeHeader = styled.div`
  height: 20px;
  margin: 5px 5px 0 8px;
  border: solid #d2d5d7;
  border-width: 0 1px 1px 0;
`;

const Tree = styled.ul`
  margin: 0;
  padding: 0 0 0 9px;
  list-style: none;
`;

const TreeRow = styled.li`
  display: flex;
  align-items: center;
  height: 18px;
`;

const guideLine = (size) => `linear-gradient(#bfc2c5, #bfc2c5) 10px 0 / 1px ${size} no-repeat`;
const guideTick = "linear-gradient(#bfc2c5, #bfc2c5) 10px 9px / 9px 1px no-repeat";

const guides = {
  l: guideLine("100%"),
  t: `${guideLine("100%")}, ${guideTick}`,
  e: `${guideLine("13px")}, ${guideTick}`,
  o: guideLine("4px"),
  c: guideLine("3px"),
  b: "none",
};

const Guide = styled.span`
  display: flex;
  align-items: center;
  justify-content: center;
  width: 20px;
  height: 18px;
  background: ${(p) => guides[p.$type]};
`;

const TreeIcon = styled.span`
  padding: 0 4px 0 2px;
`;

const TreeLabel = styled.button`
  height: 17px;
  padding: 0 2px 0 1px;
  white-space: nowrap;
  background: ${(p) => (p.$selected ? "#aee0fd" : "none")};
`;

const InsertMarker = styled.div`
  display: flex;
  align-items: center;
  justify-content: space-between;
  height: 6px;
  margin: 5px 5px 0 11px;
  background: linear-gradient(#6cbb50, #6cbb50) 0 center / 100% 2px no-repeat;

  &::before,
  &::after {
    content: "";
    border: solid transparent;
    border-width: 3px 0 3px 4px;
    border-left-color: #6cbb50;
  }

  &::after {
    border-width: 3px 4px 3px 0;
    border-right-color: #6cbb50;
  }
`;

const Viewport = styled.section`
  position: relative;
  flex: 1;
  min-width: 0;
  overflow: hidden;
  background: #e9eaed;
`;

const ModelSvg = styled.svg`
  position: absolute;
  left: calc(50% - 409px);
  top: 138px;
  width: 780px;
  height: 550px;
`;

const Pointer = styled.svg`
  position: absolute;
  left: 119px;
  top: 295px;
  width: 12px;
  height: 19px;
`;

const ViewBar = styled.div`
  position: relative;
  display: flex;
  width: max-content;
  margin: 7px auto 0;
  padding: 3px 2px;
  background: #f9fafc;
  border: 1px solid #a0a2a5;
`;

const ViewButton = styled.button`
  position: relative;
  display: flex;
  flex: none;
  align-items: center;
  justify-content: center;
  width: 22px;
  height: 24px;
  margin: 0 2px;
  border: 1px solid ${(p) => (p.$on ? "#aaacaf" : "transparent")};
  background: ${(p) => (p.$on ? "#dfe0e2" : "none")};
`;

const Corner = styled.i`
  position: absolute;
  right: 0;
  bottom: 0;
  width: 5px;
  height: 5px;
  background: linear-gradient(135deg, transparent 50%, #555 50%);
`;

const StatusBar = styled.footer`
  display: flex;
  align-items: center;
  height: 32px;
  padding-left: 4px;
  background: #f8faf9;
  border-top: 1px solid #b3b7bc;

  > ${BarLine} {
    margin-left: 5px;
  }
`;

const StatusRight = styled.div`
  display: flex;
  align-items: center;
  gap: 3px;
  margin-left: auto;
  padding-right: 18px;
`;

const FindBox = styled.div`
  display: flex;
  height: 24px;
  border: 1px solid #b3b5b7;

  button {
    display: flex;
    align-items: center;
    justify-content: center;
    width: 27px;
  }

  button + button {
    width: 14px;
    border-left: 1px solid #b3b5b7;
  }
`;

const Count = styled.span`
  width: 84px;
  padding-left: 1px;
`;

const SelectBox = styled.div`
  display: flex;
  width: 165px;
  height: 23px;
  border: 1px solid #a4a7aa;

  select {
    flex: 1;
    padding-left: 7px;
    appearance: none;
  }

  span {
    display: flex;
    align-items: center;
    justify-content: center;
    width: 16px;
    border-left: 1px solid #a4a7aa;
  }
`;

export default App;
